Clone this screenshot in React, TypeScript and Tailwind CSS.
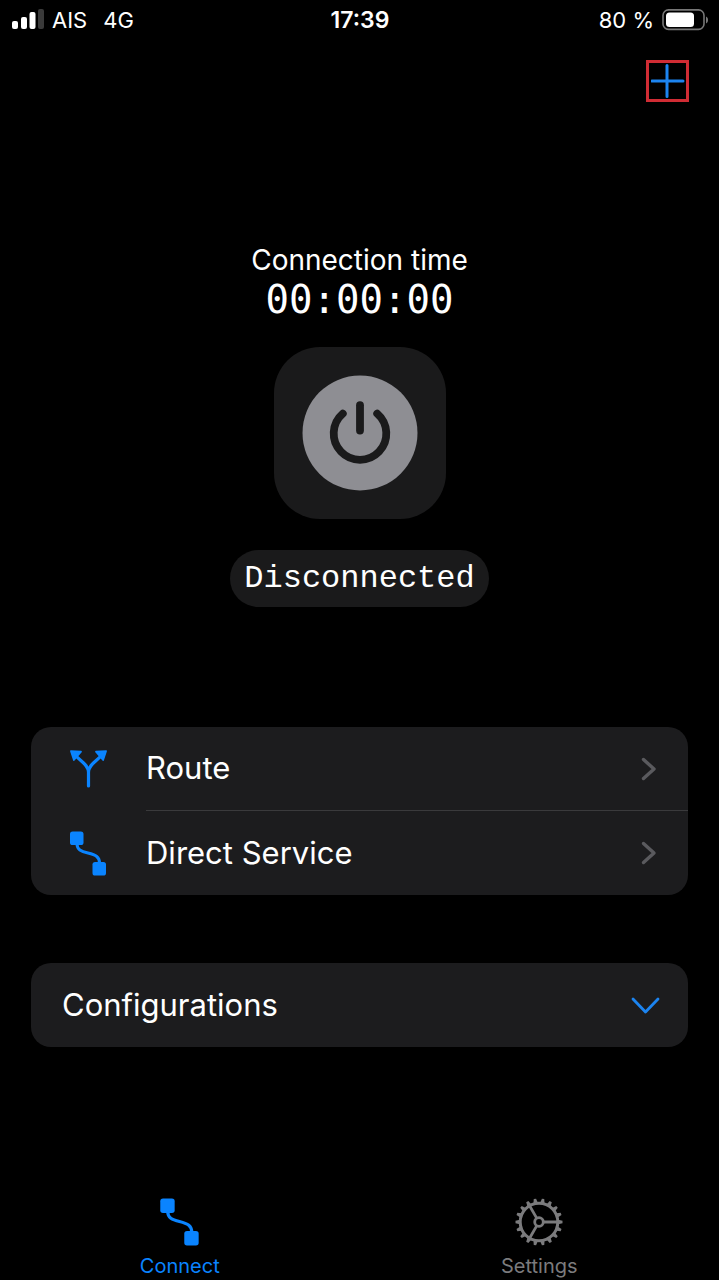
import React, { useState } from "react";

interface IconProps {
  className?: string;
}

function SignalIcon() {
  return (
    <svg viewBox="0 0 32 22" className="w-8 h-[22px]" aria-hidden="true">
      <rect x="0" y="12" width="6" height="8" rx="2" fill="#fff" />
      <rect x="9" y="8" width="6" height="12" rx="2" fill="#fff" />
      <rect x="17.500" y="3" width="6" height="17" rx="2" fill="#fff" />
      <rect x="26" y="0" width="6" height="20" rx="2" fill="#3a3a3a" />
    </svg>
  );
}

function BatteryIcon() {
  return (
    <svg viewBox="0 0 46 22" className="w-[46px] h-[22px]" aria-hidden="true">
      <rect x="1" y="0.900" width="41" height="19.500" rx="5.500" fill="none" stroke="#777" strokeWidth="1.600" />
      <rect x="4" y="3.500" width="28" height="14.500" rx="3.500" fill="#fff" />
      <path d="M44 7.500v7c1.600-.7 2-2 2-3.500S45.600 8.200 44 7.500z" fill="#777" />
    </svg>
  );
}

function PlusIcon() {
  return (
    <svg viewBox="0 0 34 34" className="w-[34px] h-[34px]" aria-hidden="true">
      <path d="M16 1.500v31M1 17h31" fill="none" stroke="#1c84f0" strokeWidth="3" strokeLinecap="round" />
    </svg>
  );
}

function PowerIcon() {
  return (
    <svg viewBox="0 0 116 116" className="w-[116px] h-[116px]" aria-hidden="true">
      <circle cx="58" cy="58" r="57.500" fill="#8e8e93" />
      <g fill="none" stroke="#1a1a1b" strokeLinecap="round">
        <path d="M40.800 38.600A26.300 26.300 0 1 0 75.200 38.600" strokeWidth="7.800" />
        <path d="M58 30.200V55.500" strokeWidth="7.800" />
      </g>
    </svg>
  );
}

function BranchIcon() {
  return (
    <svg viewBox="0 0 38 38" className="w-[38px] h-[38px]" aria-hidden="true">
      <path
        d="M18.500 36V22C18.500 15 11 11.500 6 6M18.500 22C18.500 15 26 11.500 31 6"
        fill="none"
        stroke="#0a84ff"
        strokeWidth="3.200"
        strokeLinecap="round"
      />
      <path
        d="M1 1.200L11 1.700L3.900 10ZM36 1.200L26 1.700L33.100 10Z"
        fill="#0a84ff"
        stroke="#0a84ff"
        strokeWidth="1.800"
        strokeLinejoin="round"
      />
    </svg>
  );
}

function PathIcon({ className }: IconProps) {
  return (
    <svg viewBox="0 0 37 45" className={className} aria-hidden="true">
      <rect x="0" y="0.500" width="13.500" height="13.500" rx="2.600" fill="#0a84ff" />
      <rect x="22.500" y="31" width="13.500" height="13.500" rx="2.600" fill="#0a84ff" />
      <path
        d="M7 13C7 18.500 11 20.300 18 22C26 24 29.500 26 29.500 32"
        fill="none"
        stroke="#0a84ff"
        strokeWidth="3"
      />
    </svg>
  );
}

function ChevronRightIcon() {
  return (
    <svg viewBox="0 0 16 24" className="w-4 h-6" aria-hidden="true">
      <path
        d="M2.500 2.500L13 12L2.500 21.500"
        fill="none"
        stroke="#5a5a5e"
        strokeWidth="3.400"
        strokeLinecap="round"
        strokeLinejoin="round"
      />
    </svg>
  );
}

function ChevronDownIcon({ className }: IconProps) {
  return (
    <svg viewBox="0 0 30 18" className={className} aria-hidden="true">
      <path
        d="M3 3L15.500 16L28 3"
        fill="none"
        stroke="#1c84f0"
        strokeWidth="2.800"
        strokeLinecap="round"
        strokeLinejoin="round"
      />
    </svg>
  );
}

const TEETH = Array.from({ length: 18 }, (_, i) => i * 20 + 10);

function GearIcon() {
  return (
    <svg viewBox="0 0 48 48" className="w-12 h-12" aria-hidden="true">
      <g fill="none" stroke="#7b7b7d">
        <circle cx="24" cy="24" r="18.800" strokeWidth="3" />
        <circle cx="24" cy="24" r="4.300" strokeWidth="2.800" />
        <path d="M28.500 24H42.500M21.700 20.100L14.700 8M21.700 27.900L14.700 40" strokeWidth="2.800" />
      </g>
      {TEETH.map((deg) => (
        <path key={deg} d="M21.800 4.800L22.800 0.500H25.200L26.200 4.800Z" fill="#7b7b7d" transform={`rotate(${deg} 24 24)`} />
      ))}
    </svg>
  );
}

interface RowProps {
  icon: React.ReactNode;
  label: string;
  divider?: boolean;
}

function MenuRow({ icon, label, divider }: RowProps) {
  return (
    <button type="button" className="flex w-full items-stretch text-left">
      <span className="flex w-[115px] shrink-0 items-center justify-center">{icon}</span>
      <span
        className={`flex h-[84px] flex-1 items-center justify-between pr-[31px] text-[31px] ${
          divider ? "border-b border-[#3a3a3c]" : ""
        }`}
      >
        {label}
        <ChevronRightIcon />
      </span>
    </button>
  );
}

export default function App() {
  const [open, setOpen] = useState(false);

  return (
    <div className="flex min-h-screen flex-col bg-black font-['Inter',sans-serif] text-white">
      <header>
        <div className="grid h-10 grid-cols-3 items-center pr-[11px] pl-3 text-[22px]">
          <div className="flex items-center gap-2">
            <SignalIcon />
            <span>AIS</span>
            <span className="ml-2">4G</span>
          </div>
          <span className="text-center text-[23px] font-semibold">17:39</span>
          <div className="flex items-center justify-end gap-2">
            <span>80 %</span>
            <BatteryIcon />
          </div>
        </div>
        <div className="flex justify-end pt-5 pr-[30px]">
          <button
            type="button"
            aria-label="Add configuration"
            className="flex h-[42px] w-[43px] items-center justify-center border-3 border-[#d02c34]"
          >
            <PlusIcon />
          </button>
        </div>
      </header>

      <main className="flex flex-col px-[31px] pt-[142px]">
        <section className="flex flex-col items-center">
          <h1 className="text-[28px] leading-8">Connection time</h1>
          <time className="font-['DejaVu_Sans_Mono',monospace] text-[39px] leading-12">00:00:00</time>
          <button
            type="button"
            aria-label="Toggle connection"
            className="mt-[23px] flex h-[172px] w-[172px] items-center justify-center rounded-[46px] bg-[#1a1a1b]"
          >
            <PowerIcon />
          </button>
          <p className="mt-[31px] flex h-[57px] items-center rounded-full bg-[#1a1a1b] px-[14px] font-['Liberation_Mono',monospace] text-[32px]">
            Disconnected
          </p>
        </section>

        <section className="mt-[120px] overflow-hidden rounded-[20px] bg-[#1c1c1e]">
          <MenuRow icon={<BranchIcon />} label="Route" divider />
          <MenuRow icon={<PathIcon className="h-[45px] w-[37px]" />} label="Direct Service" />
        </section>

        <section className="mt-[68px]">
          <button
            type="button"
            aria-expanded={open}
            onClick={() => setOpen(!open)}
            className="flex h-[84px] w-full items-center justify-between rounded-[20px] bg-[#1c1c1e] pr-7 pl-[31px] text-[31px]"
          >
            Configurations
            <ChevronDownIcon className={open ? "h-[18px] w-[30px] rotate-180" : "h-[18px] w-[30px]"} />
          </button>
        </section>
      </main>

      <nav className="mt-auto grid grid-cols-2 text-[20px] leading-7">
        <a href="#connect" aria-current="page" className="flex flex-col items-center gap-1.5 text-[#0a84ff]">
          <PathIcon className="h-12 w-10" />
          Connect
        </a>
        <a href="#settings" className="flex flex-col items-center gap-1.5 text-[#7b7b7d]">
          <GearIcon />
          Settings
        </a>
      </nav>
    </div>
  );
}
